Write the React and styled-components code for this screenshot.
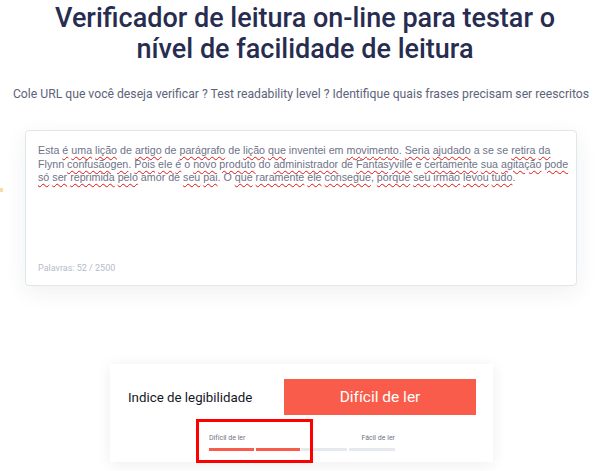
import React from "react";
import styled, { createGlobalStyle } from "styled-components";

const Global = createGlobalStyle`
  html, body { margin: 0; padding: 0; background: #ffffff; }
  body { font-family: Roboto, "Liberation Sans", Arial, sans-serif; overflow: hidden; }
  * { box-sizing: border-box; }
`;

const Page = styled.div`
  position: relative;
  width: 597px;
  height: 471px;
  padding: 3px 20px 0 25px;
  display: flex;
  flex-direction: column;
  align-items: stretch;
`;

const Title = styled.h1`
  margin: 0;
  padding: 0 14px 0 22px;
  font-family: Roboto, sans-serif;
  font-weight: 500;
  font-size: 27px;
  line-height: 31px;
  color: #272c51;
  text-align: center;
`;

const Subtitle = styled.p`
  margin: 21px -20px 0 -20px;
  font-family: Roboto, sans-serif;
  font-size: 12.2px;
  line-height: 16px;
  color: #5d6379;
  text-align: center;
  white-space: nowrap;
`;

const EditorCard = styled.div`
  margin-top: 28px;
  height: 156px;
  background: #fff;
  border: 1px solid #e2e6ea;
  border-radius: 4px;
  box-shadow: 0 6px 22px rgba(30, 40, 70, 0.07);
  padding: 13px 12px 12px 12px;
  display: flex;
  flex-direction: column;
  justify-content: space-between;
`;

const Text = styled.div`
  font-family: "Liberation Sans", Arial, sans-serif;
  font-size: 10.7px;
  line-height: 13.5px;
  color: #6e7388;
`;

const Line = styled.div`
  white-space: nowrap;
`;

const W = styled.span`
  text-decoration: underline wavy #e0140f;
  text-decoration-thickness: 1.3px;
  text-underline-offset: 2px;
`;

const Counter = styled.div`
  font-family: Roboto, sans-serif;
  font-size: 9px;
  color: #b6bccb;
`;

const ResultCard = styled.div`
  position: relative;
  align-self: flex-start;
  margin: 78px 0 0 85px;
  width: 383px;
  height: 98px;
  background: #fff;
  box-shadow: 0 2px 14px rgba(30, 40, 70, 0.08);
  padding: 15px 17px 0 18px;
  display: flex;
  flex-direction: column;
`;

const ResultRow = styled.div`
  display: flex;
  align-items: center;
  justify-content: space-between;
`;

const ResultLabel = styled.span`
  font-family: Roboto, sans-serif;
  font-size: 13.3px;
  color: #14161f;
`;

const Verdict = styled.div`
  width: 192px;
  height: 36px;
  background: #fa5c4b;
  color: #fff;
  font-family: Roboto, sans-serif;
  font-size: 15.5px;
  display: flex;
  align-items: center;
  justify-content: center;
`;

const Scale = styled.div`
  width: 186px;
  margin: 19px auto 0 auto;
  display: flex;
  flex-direction: column;
  gap: 6px;
`;

const ScaleLabels = styled.div`
  display: flex;
  justify-content: space-between;
  font-family: Roboto, sans-serif;
  font-size: 7px;
  line-height: 8px;
  color: #6f7386;
`;

const Bars = styled.div`
  display: grid;
  grid-template-columns: 45px 44px 46px 46px;
  justify-content: space-between;
`;

const Bar = styled.div`
  height: 3px;
  background: ${(p) => (p.$on ? "#f95c4b" : "#e6eaee")};
`;

const Highlight = styled.div`
  position: absolute;
  left: 86px;
  top: 55px;
  width: 117px;
  height: 44px;
  border: 3px solid #ff0000;
`;

const EdgeMark = styled.div`
  position: absolute;
  left: 0;
  top: 188px;
  width: 3px;
  height: 4px;
  background: #f6c36a;
  opacity: 0.6;
`;

export default function App() {
  return (
    <>
      <Global />
      <Page>
        <EdgeMark />
        <Title>
          Verificador de leitura on-line para testar o nível de facilidade de
          leitura
        </Title>
        <Subtitle>
          Cole URL que você deseja verificar ? Test readability level ?
          Identifique quais frases precisam ser reescritos
        </Subtitle>
        <EditorCard>
          <Text>
            <Line>
              Esta <W>é</W> <W>uma</W> <W>lição</W> de <W>artigo</W> de{" "}
              <W>parágrafo</W> de <W>lição</W> <W>que</W> inventei em{" "}
              <W>movimento</W>. <W>Seria</W> <W>ajudado</W> a se se{" "}
              <W>retira</W> <W>da</W>
            </Line>
            <Line>
              Flynn <W>confusãogen</W>. <W>Pois</W> <W>ele</W> <W>é</W> o{" "}
              <W>novo</W> <W>produto</W> do <W>administrador</W> de{" "}
              <W>Fantasyville</W> e <W>certamente</W> <W>sua</W>{" "}
              <W>agitação</W> <W>pode</W>
            </Line>
            <Line>
              <W>só</W> <W>ser</W> <W>reprimida</W> <W>pelo</W> amor de{" "}
              <W>seu</W> <W>pai</W>. O <W>que</W> <W>raramente</W> <W>ele</W>{" "}
              <W>consegue</W>, <W>porque</W> <W>seu</W> <W>irmão</W>{" "}
              <W>levou</W> <W>tudo</W>.
            </Line>
          </Text>
          <Counter>Palavras: 52 / 2500</Counter>
        </EditorCard>
        <ResultCard>
          <ResultRow>
            <ResultLabel>Indice de legibilidade</ResultLabel>
            <Verdict>Difícil de ler</Verdict>
          </ResultRow>
          <Scale>
            <ScaleLabels>
              <span>Difícil de ler</span>
              <span>Fácil de ler</span>
            </ScaleLabels>
            <Bars>
              <Bar $on />
              <Bar $on />
              <Bar />
              <Bar />
            </Bars>
          </Scale>
          <Highlight />
        </ResultCard>
      </Page>
    </>
  );
}
